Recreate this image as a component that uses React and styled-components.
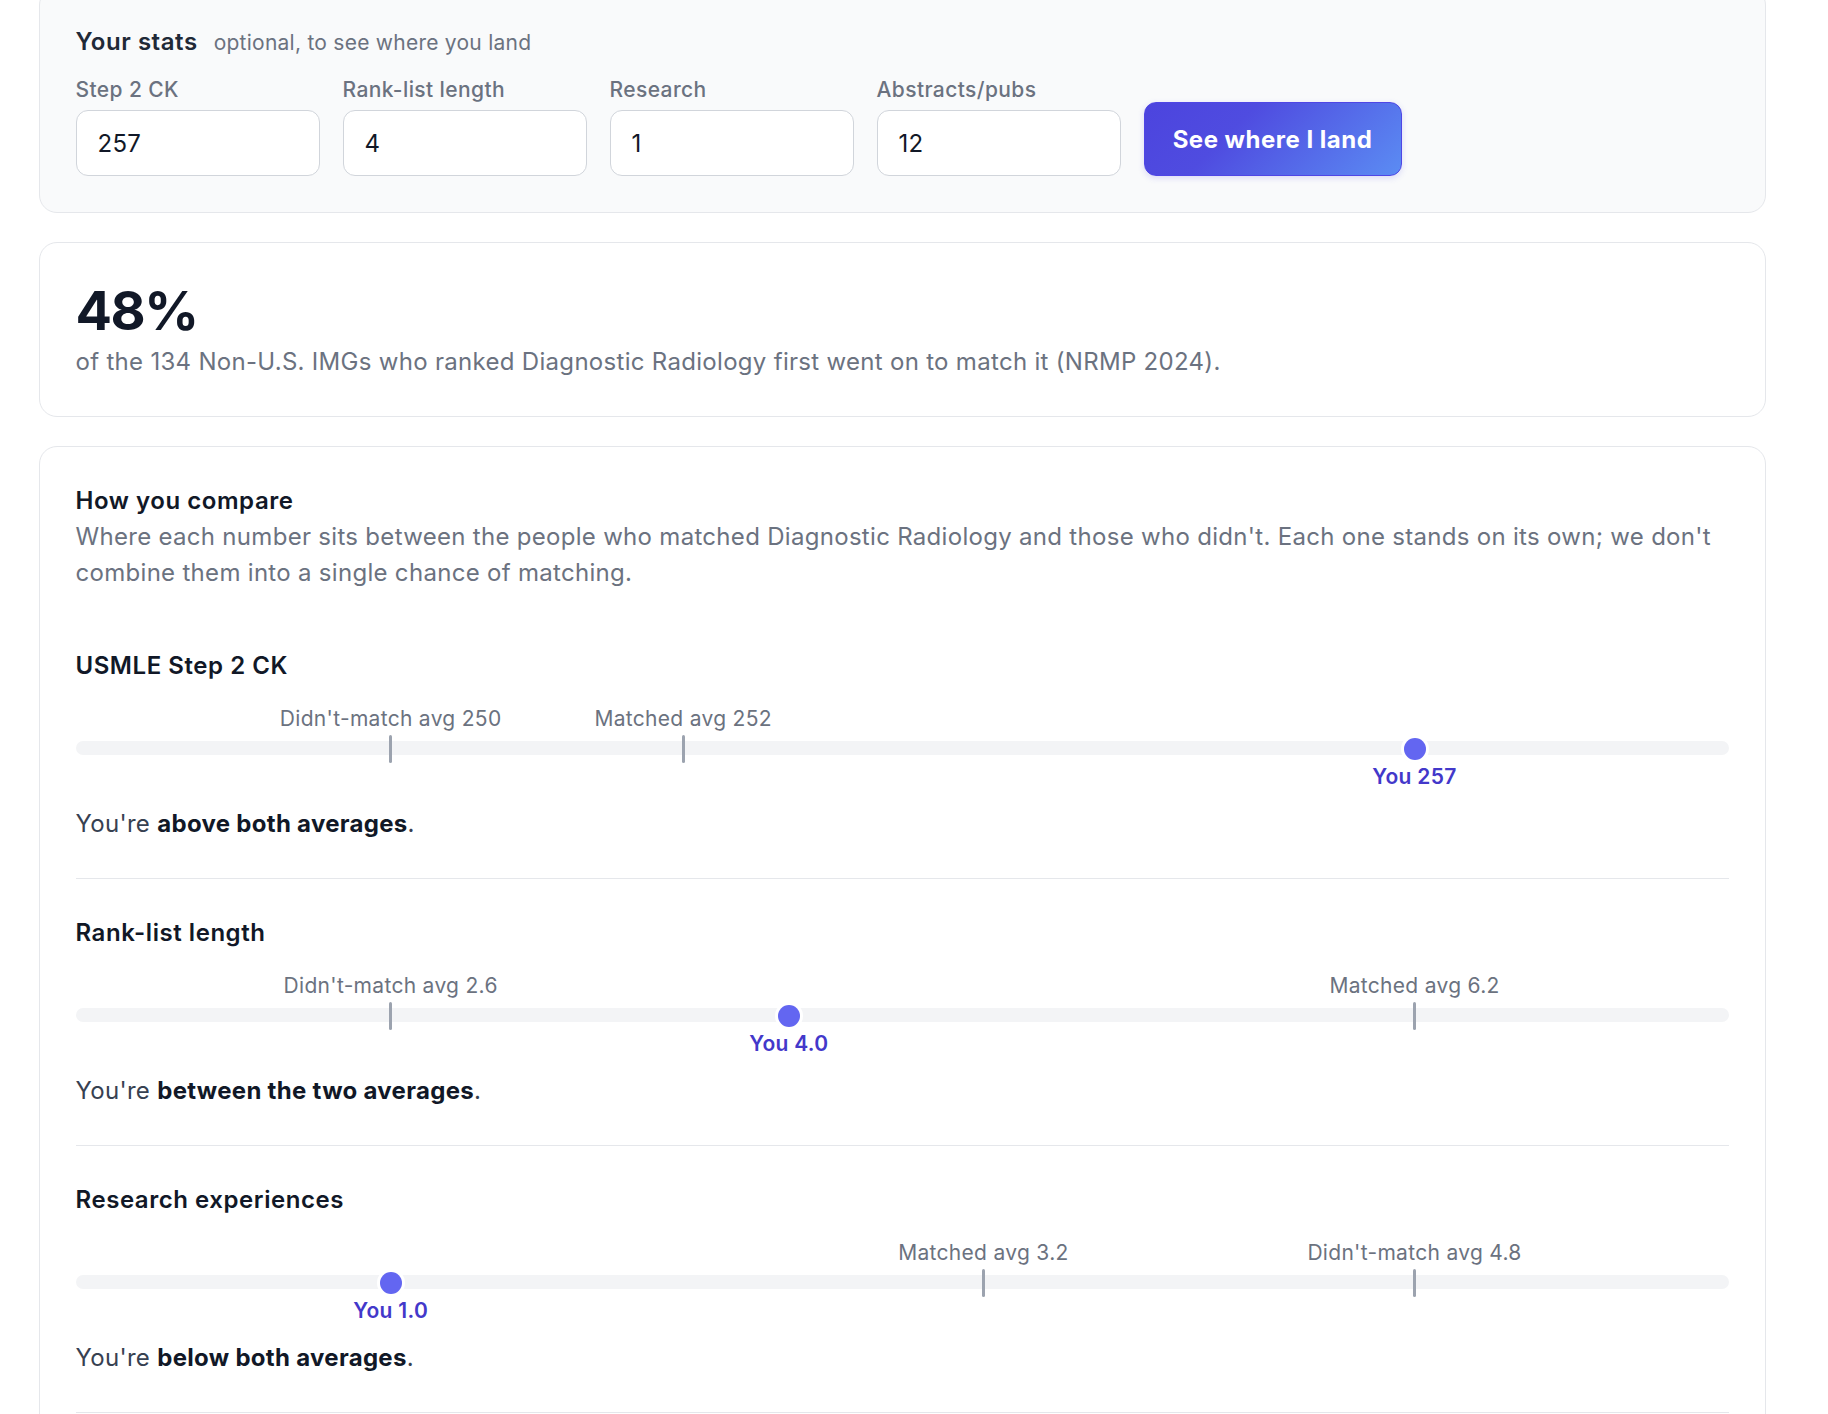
import React from "react";
import styled, { createGlobalStyle } from "styled-components";

const GlobalStyle = createGlobalStyle`
  html, body { margin: 0; padding: 0; background: #ffffff; overflow: hidden; }
  body { font-family: Inter, "Noto Sans", "Liberation Sans", sans-serif; color: #111827; }
  * { box-sizing: border-box; }
`;

const Page = styled.div`
  display: flex;
  flex-direction: column;
  gap: 29px;
  padding: 0 62px 0 38.5px;
  margin-top: -13px;
`;

const Card = styled.section`
  background: ${(p) => (p.$muted ? "#f9fafb" : "#ffffff")};
  border: 1px solid #e5e7eb;
  border-radius: 18px;
  padding: 36px;
`;

const TitleRow = styled.div`
  display: flex;
  align-items: baseline;
  gap: 16px;
`;

const CardTitle = styled.h2`
  margin: 0;
  font-size: 24px;
  line-height: 36px;
  font-weight: 600;
  letter-spacing: 0.55px;
  color: ${(p) => (p.$dark ? "#111827" : "#1f2937")};
`;

const Hint = styled.span`
  font-size: 21px;
  line-height: 29px;
  letter-spacing: 0.25px;
  color: #6b7280;
`;

const Fields = styled.div`
  display: flex;
  align-items: flex-end;
  gap: 23px;
  margin-top: 15px;
`;

const Field = styled.label`
  display: flex;
  flex-direction: column;
  width: 244px;
`;

const FieldLabel = styled.span`
  font-size: 21px;
  line-height: 29.25px;
  font-weight: 500;
  letter-spacing: 0.4px;
  color: #6b7280;
  margin-bottom: 6px;
`;

const Input = styled.input`
  height: 66px;
  width: 100%;
  border: 1px solid #d1d5db;
  border-radius: 12px;
  background: #ffffff;
  padding: 0 21px;
  font-family: inherit;
  font-size: 24px;
  letter-spacing: 0.3px;
  color: #111827;
  outline: none;
`;

const Button = styled.button`
  height: 74px;
  width: 258px;
  border: 1px solid #4f46e5;
  border-radius: 12px;
  background: linear-gradient(135deg, #4c44de 0%, #4f4ce0 35%, #5b8cf3 100%);
  color: #ffffff;
  font-family: inherit;
  font-size: 24px;
  font-weight: 700;
  letter-spacing: 0.5px;
  box-shadow: 0 2px 6px rgba(79, 70, 229, 0.18);
  cursor: pointer;
`;

const BigStat = styled.div`
  font-size: 54px;
  line-height: 64.8px;
  font-weight: 700;
  letter-spacing: -1.5px;
  color: #111827;
`;

const Muted = styled.p`
  margin: 0 0 ${(p) => p.$mb || 0}px;
  font-size: 24px;
  line-height: 36px;
  letter-spacing: 0.3px;
  color: #6b7280;
`;

const Section = styled.div`
  padding: 36px 0;
  border-bottom: 1.5px solid #e5e7eb;
`;

const SectionTitle = styled.h3`
  margin: 0;
  font-size: 24px;
  line-height: 36px;
  font-weight: 600;
  letter-spacing: 0.55px;
  color: #111827;
`;

const Chart = styled.div`
  position: relative;
  height: 122px;
`;

const Track = styled.div`
  position: absolute;
  left: 0;
  right: 0;
  top: 57.8px;
  height: 13.5px;
  border-radius: 999px;
  background: #f3f4f6;
`;

const Marker = styled.div`
  position: absolute;
  top: 0;
  width: 0;
  height: 100%;
`;

const MarkerLabel = styled.span`
  position: absolute;
  top: 20.4px;
  left: 0;
  transform: translateX(-50%);
  white-space: nowrap;
  font-size: 21px;
  line-height: 29.25px;
  letter-spacing: 0.3px;
  color: #6b7280;
`;

const Tick = styled.span`
  position: absolute;
  top: 51.3px;
  left: -1.6px;
  width: 3.2px;
  height: 27.7px;
  border-radius: 2px;
  background: #9ca3af;
`;

const Dot = styled.span`
  position: absolute;
  top: 54px;
  left: -11px;
  width: 22px;
  height: 22px;
  border-radius: 50%;
  background: #6366f1;
  box-shadow: 0 0 0 3px #ffffff, 0 1px 3px rgba(0, 0, 0, 0.12);
`;

const YouLabel = styled.span`
  position: absolute;
  top: 78px;
  left: 0;
  transform: translateX(-50%);
  white-space: nowrap;
  font-size: 21px;
  line-height: 29.25px;
  font-weight: 600;
  letter-spacing: 0.3px;
  color: #4338ca;
`;

const Sentence = styled.p`
  margin: 0;
  font-size: 24px;
  line-height: 36px;
  letter-spacing: 0.3px;
  color: #374151;

  strong {
    font-weight: 700;
    color: #111827;
  }
`;

const fields = [
  { label: "Step 2 CK", value: "257" },
  { label: "Rank-list length", value: "4" },
  { label: "Research", value: "1" },
  { label: "Abstracts/pubs", value: "12" },
];

const metrics = [
  {
    title: "USMLE Step 2 CK",
    marks: [
      { label: "Didn't-match avg 250", v: 250 },
      { label: "Matched avg 252", v: 252 },
    ],
    you: 257,
    youText: "You 257",
    verdict: "above both averages",
  },
  {
    title: "Rank-list length",
    marks: [
      { label: "Didn't-match avg 2.6", v: 2.6 },
      { label: "Matched avg 6.2", v: 6.2 },
    ],
    you: 4.0,
    youText: "You 4.0",
    verdict: "between the two averages",
  },
  {
    title: "Research experiences",
    marks: [
      { label: "Matched avg 3.2", v: 3.2 },
      { label: "Didn't-match avg 4.8", v: 4.8 },
    ],
    you: 1.0,
    youText: "You 1.0",
    verdict: "below both averages",
  },
];

function MetricRow({ m }) {
  const values = [...m.marks.map((x) => x.v), m.you];
  const min = Math.min(...values);
  const max = Math.max(...values);
  const pos = (v) => `${19.06 + ((v - min) / (max - min)) * 61.92}%`;
  return (
    <Section>
      <SectionTitle>{m.title}</SectionTitle>
      <Chart>
        <Track />
        {m.marks.map((mk) => (
          <Marker key={mk.label} style={{ left: pos(mk.v) }}>
            <MarkerLabel>{mk.label}</MarkerLabel>
            <Tick />
          </Marker>
        ))}
        <Marker style={{ left: pos(m.you) }}>
          <Dot />
          <YouLabel>{m.youText}</YouLabel>
        </Marker>
      </Chart>
      <Sentence>
        You're <strong>{m.verdict}</strong>.
      </Sentence>
    </Section>
  );
}

export default function App() {
  return (
    <>
      <GlobalStyle />
      <Page>
        <Card $muted>
          <TitleRow>
            <CardTitle>Your stats</CardTitle>
            <Hint>optional, to see where you land</Hint>
          </TitleRow>
          <Fields>
            {fields.map((f) => (
              <Field key={f.label}>
                <FieldLabel>{f.label}</FieldLabel>
                <Input defaultValue={f.value} />
              </Field>
            ))}
            <Button type="button">See where I land</Button>
          </Fields>
        </Card>

        <Card>
          <BigStat>48%</BigStat>
          <Muted>
            of the 134 Non-U.S. IMGs who ranked Diagnostic Radiology first went on to match it (NRMP 2024).
          </Muted>
        </Card>

        <Card>
          <CardTitle $dark>How you compare</CardTitle>
          <Muted $mb={20.5}>
            Where each number sits between the people who matched Diagnostic Radiology and those who didn't. Each one
            stands on its own; we don't combine them into a single chance of matching.
          </Muted>
          {metrics.map((m) => (
            <MetricRow key={m.title} m={m} />
          ))}
        </Card>
      </Page>
    </>
  );
}
